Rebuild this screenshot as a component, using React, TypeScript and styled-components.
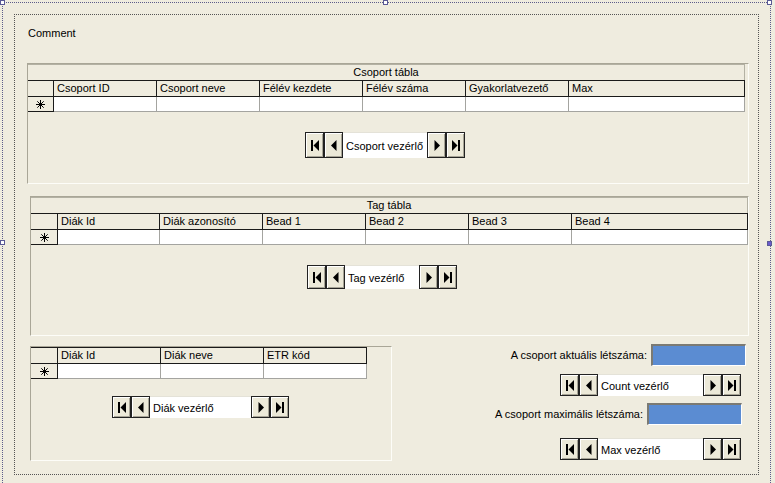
import styled, { createGlobalStyle } from "styled-components";

const GlobalStyle = createGlobalStyle`
  html, body {
    margin: 0;
    padding: 0;
    background: #efecdf;
    overflow: hidden;
  }
  body {
    font-family: "Liberation Sans", Arial, sans-serif;
    font-size: 11px;
    color: #000;
  }
`;

const Canvas = styled.div`
  position: relative;
  margin: 2px 0 0 2px;
  width: 767px;
  height: 500px;
  border: 1px dotted #5c5c8a;
  border-bottom: none;
`;

type HandleProps = { left: number; top: number; filled?: boolean };
const Handle = styled.div<HandleProps>`
  position: absolute;
  left: ${(p) => p.left}px;
  top: ${(p) => p.top}px;
  width: 3px;
  height: 3px;
  border: 1px solid #5a5a96;
  background: ${(p) => (p.filled ? "#6a5acd" : "#fff")};
`;

const Form = styled.div`
  margin: 11px 0 0 11px;
  width: 743px;
  height: 459px;
  border: 1px dotted #555;
  display: flex;
  flex-direction: column;
`;

const Comment = styled.div`
  margin: 12px 0 0 13px;
  line-height: 13px;
  height: 13px;
`;

type PanelProps = { w: number; h: number; ml: number; mt: number };
const Panel = styled.div<PanelProps>`
  box-sizing: border-box;
  width: ${(p) => p.w}px;
  height: ${(p) => p.h}px;
  margin-left: ${(p) => p.ml}px;
  margin-top: ${(p) => p.mt}px;
  border: 1px solid;
  border-color: #a9a697 #fdfdf8 #fdfdf8 #a9a697;
  display: flex;
  flex-direction: column;
  align-items: flex-start;
  flex-shrink: 0;
`;

const Table = styled.div`
  display: flex;
  flex-direction: column;
`;

const Caption = styled.div`
  height: 15px;
  line-height: 15px;
  text-align: center;
  border-top: 1px solid #b3b1a3;
  border-right: 1px solid #b3b1a3;
`;

const HeaderRow = styled.div`
  display: flex;
  border-top: 1px solid #1a1a1a;
  border-bottom: 1px solid #1a1a1a;
  height: 15px;
`;

const DataRow = styled.div`
  display: flex;
  height: 14px;
  border-bottom: 1px solid #a4a4a0;
`;

type CellProps = { w: number };
const HeadCell = styled.div<CellProps>`
  box-sizing: border-box;
  width: ${(p) => p.w}px;
  border-right: 1px solid #1a1a1a;
  padding-left: 3px;
  line-height: 15px;
  white-space: nowrap;
  overflow: hidden;
`;

const DataCell = styled.div<CellProps>`
  box-sizing: border-box;
  width: ${(p) => p.w}px;
  background: #fff;
  border-right: 1px solid #a4a4a0;
`;

const Selector = styled.div<CellProps>`
  box-sizing: border-box;
  width: ${(p) => p.w}px;
  border-right: 1px solid #1a1a1a;
  border-bottom: 1px solid #1a1a1a;
  margin-bottom: -1px;
  display: flex;
  align-items: center;
  justify-content: center;
`;

const Star = () => (
  <svg width="9" height="9" viewBox="0 0 9 9">
    <g stroke="#000" strokeWidth="1">
      <line x1="0" y1="4.5" x2="9" y2="4.5" />
      <line x1="4.5" y1="0" x2="4.5" y2="9" />
      <line x1="1.3" y1="1.3" x2="7.7" y2="7.7" />
      <line x1="7.7" y1="1.3" x2="1.3" y2="7.7" />
    </g>
  </svg>
);

type Col = { label: string; w: number };

const Grid = ({ caption, sel, cols }: { caption?: string; sel: number; cols: Col[] }) => (
  <Table>
    {caption && <Caption>{caption}</Caption>}
    <HeaderRow>
      <HeadCell w={sel} />
      {cols.map((c) => (
        <HeadCell key={c.label} w={c.w}>
          {c.label}
        </HeadCell>
      ))}
    </HeaderRow>
    <DataRow>
      <Selector w={sel}>
        <Star />
      </Selector>
      {cols.map((c) => (
        <DataCell key={c.label} w={c.w} />
      ))}
    </DataRow>
  </Table>
);

type NavProps = { h: number; ml?: number; mt?: number };
const NavBar = styled.div<NavProps>`
  display: flex;
  flex-shrink: 0;
  height: ${(p) => p.h}px;
  margin-left: ${(p) => p.ml ?? 0}px;
  margin-top: ${(p) => p.mt ?? 0}px;
`;

const NavButton = styled.div`
  box-sizing: border-box;
  width: 19px;
  height: 100%;
  border: 1px solid #222;
  background: #ece9d8;
  box-shadow: inset 1px 1px #fff, inset -1px -1px #a7a496;
  display: flex;
  align-items: center;
  justify-content: center;
`;

const NavLabel = styled.div<CellProps>`
  box-sizing: border-box;
  width: ${(p) => p.w}px;
  background: #fff;
  border-top: 1px solid #e4e2d8;
  padding-left: 3px;
  display: flex;
  align-items: center;
  white-space: nowrap;
`;

const NavIcon = ({ kind }: { kind: "first" | "prev" | "next" | "last" }) => (
  <svg width="10" height="11" viewBox="0 0 10 11">
    {kind === "first" && (
      <>
        <rect x="1" y="0" width="2" height="11" fill="#000" />
        <polygon points="9,0 3.5,5.5 9,11" fill="#000" />
      </>
    )}
    {kind === "prev" && <polygon points="7.5,0 2,5.5 7.5,11" fill="#000" />}
    {kind === "next" && <polygon points="2.5,0 8,5.5 2.5,11" fill="#000" />}
    {kind === "last" && (
      <>
        <polygon points="1,0 6.5,5.5 1,11" fill="#000" />
        <rect x="7" y="0" width="2" height="11" fill="#000" />
      </>
    )}
  </svg>
);

const Navigator = ({ label, w, h, ml, mt }: { label: string; w: number; h: number; ml?: number; mt?: number }) => (
  <NavBar h={h} ml={ml} mt={mt}>
    <NavButton>
      <NavIcon kind="first" />
    </NavButton>
    <NavButton>
      <NavIcon kind="prev" />
    </NavButton>
    <NavLabel w={w}>{label}</NavLabel>
    <NavButton>
      <NavIcon kind="next" />
    </NavButton>
    <NavButton>
      <NavIcon kind="last" />
    </NavButton>
  </NavBar>
);

const BottomRow = styled.div`
  display: flex;
  margin-top: 8px;
`;

const Stats = styled.div`
  margin-left: 109px;
  width: 247px;
  display: flex;
  flex-direction: column;
`;

type LineProps = { pr: number; mt: number };
const StatLine = styled.div<LineProps>`
  display: flex;
  justify-content: flex-end;
  align-items: center;
  padding-right: ${(p) => p.pr}px;
  margin-top: ${(p) => p.mt}px;
  gap: 4px;
`;

const StatText = styled.span`
  white-space: nowrap;
  flex-shrink: 0;
`;

const BlueBox = styled.div`
  box-sizing: border-box;
  flex-shrink: 0;
  width: 95px;
  height: 22px;
  background: #5b8cd2;
  border-style: solid;
  border-width: 2px 1px 1px 2px;
  border-color: #7b7a73 #fff #fff #7b7a73;
`;

const App = () => (
  <>
    <GlobalStyle />
    <Canvas>
      <Handle left={-3} top={-3} />
      <Handle left={380} top={-3} />
      <Handle left={764} top={-3} />
      <Handle left={-3} top={237} />
      <Handle left={764} top={238} filled />
      <Form>
        <Comment>Comment</Comment>
        <Panel w={722} h={121} ml={12} mt={23}>
          <Grid
            caption="Csoport tábla"
            sel={26}
            cols={[
              { label: "Csoport ID", w: 103 },
              { label: "Csoport neve", w: 103 },
              { label: "Félév kezdete", w: 103 },
              { label: "Félév száma", w: 103 },
              { label: "Gyakorlatvezető", w: 103 },
              { label: "Max", w: 176 },
            ]}
          />
          <Navigator label="Csoport vezérlő" w={84} h={26} ml={277} mt={20} />
        </Panel>
        <Panel w={719} h={140} ml={15} mt={12}>
          <Grid
            caption="Tag tábla"
            sel={27}
            cols={[
              { label: "Diák Id", w: 102 },
              { label: "Diák azonosító", w: 103 },
              { label: "Bead 1", w: 103 },
              { label: "Bead 2", w: 103 },
              { label: "Bead 3", w: 103 },
              { label: "Bead 4", w: 176 },
            ]}
          />
          <Navigator label="Tag vezérlő" w={74} h={24} ml={276} mt={20} />
        </Panel>
        <BottomRow>
          <Panel w={362} h={115} ml={15} mt={2}>
            <Grid
              sel={27}
              cols={[
                { label: "Diák Id", w: 103 },
                { label: "Diák neve", w: 103 },
                { label: "ETR kód", w: 103 },
              ]}
            />
            <Navigator label="Diák vezérlő" w={101} h={22} ml={81} mt={17} />
          </Panel>
          <Stats>
            <StatLine pr={2} mt={0}>
              <StatText>A csoport aktuális létszáma:</StatText>
              <BlueBox />
            </StatLine>
            <StatLine pr={7} mt={8}>
              <Navigator label="Count vezérlő" w={105} h={22} />
            </StatLine>
            <StatLine pr={6} mt={7}>
              <StatText>A csoport maximális létszáma:</StatText>
              <BlueBox />
            </StatLine>
            <StatLine pr={7} mt={13}>
              <Navigator label="Max vezérlő" w={105} h={22} />
            </StatLine>
          </Stats>
        </BottomRow>
      </Form>
    </Canvas>
  </>
);

export default App;
